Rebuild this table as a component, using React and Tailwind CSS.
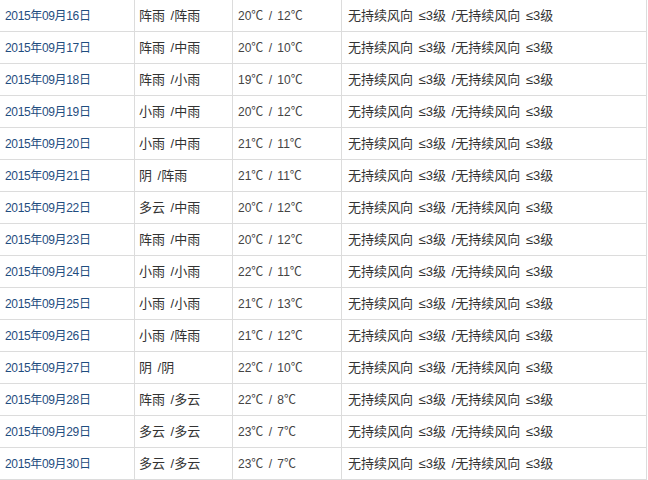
import React from 'react';

const rows = [
  ['2015年09月16日', '阵雨 /阵雨', '20℃ / 12℃'],
  ['2015年09月17日', '阵雨 /中雨', '20℃ / 10℃'],
  ['2015年09月18日', '阵雨 /小雨', '19℃ / 10℃'],
  ['2015年09月19日', '小雨 /中雨', '20℃ / 12℃'],
  ['2015年09月20日', '小雨 /中雨', '21℃ / 11℃'],
  ['2015年09月21日', '阴 /阵雨', '21℃ / 11℃'],
  ['2015年09月22日', '多云 /中雨', '20℃ / 12℃'],
  ['2015年09月23日', '阵雨 /中雨', '20℃ / 12℃'],
  ['2015年09月24日', '小雨 /小雨', '22℃ / 11℃'],
  ['2015年09月25日', '小雨 /小雨', '21℃ / 13℃'],
  ['2015年09月26日', '小雨 /阵雨', '21℃ / 12℃'],
  ['2015年09月27日', '阴 /阴', '22℃ / 10℃'],
  ['2015年09月28日', '阵雨 /多云', '22℃ / 8℃'],
  ['2015年09月29日', '多云 /多云', '23℃ / 7℃'],
  ['2015年09月30日', '多云 /多云', '23℃ / 7℃'],
];

const wind = '无持续风向 ≤3级 /无持续风向 ≤3级';

export default function App() {
  return (
    <div className="w-[648px] h-[480px] overflow-hidden bg-white" style={{ fontFamily: '"Liberation Sans", "Noto Sans CJK SC", sans-serif' }}>
      <div className="w-[647px] border-r border-[#dcdcdc]">
        {rows.map(([date, weather, temp]) => (
          <div key={date} className="grid grid-cols-[135px_98px_109px_1fr] h-[32px] border-b border-[#dcdcdc]">
            <div className="flex items-center pl-[5px] text-[12px] tracking-[-0.35px] text-[#1f4d80] border-r border-[#dcdcdc]">
              {date}
            </div>
            <div className="flex items-center pl-[4px] text-[13px] text-[#333] border-r border-[#dcdcdc] whitespace-pre [word-spacing:2px]">
              {weather}
            </div>
            <div className="flex items-center pl-[5px] text-[12px] text-[#444] border-r border-[#dcdcdc] whitespace-pre [word-spacing:2px]">
              {temp}
            </div>
            <div className="flex items-center pl-[6px] text-[13px] text-[#333] whitespace-pre [word-spacing:2px]">
              {wind}
            </div>
          </div>
        ))}
      </div>
    </div>
  );
}
